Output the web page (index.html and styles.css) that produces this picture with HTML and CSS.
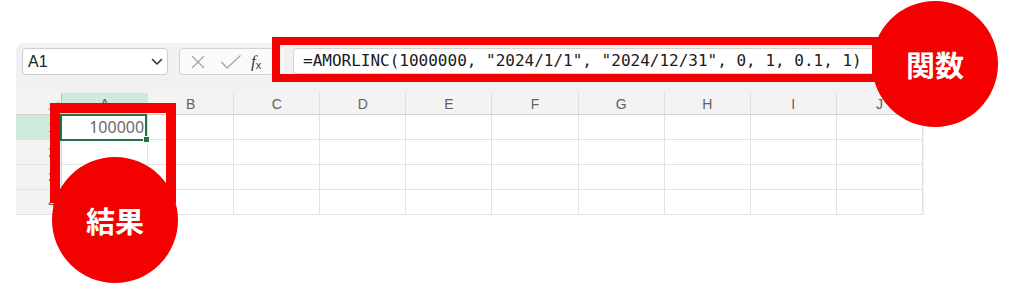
FILE: index.html
```html
<!DOCTYPE html>
<html lang="ja">
<head>
<meta charset="utf-8">
<title>AMORLINC</title>
<link rel="stylesheet" href="styles.css">
</head>
<body>
<div class="page">
  <div class="sheet">
    <div class="toolbar">
      <div class="namebox">
        <span class="ref">A1</span>
        <svg class="chev" width="12" height="8" viewBox="0 0 12 8"><path d="M1.5 1.5 L6 6 L10.5 1.5" fill="none" stroke="#333" stroke-width="1.6" stroke-linecap="round" stroke-linejoin="round"/></svg>
      </div>
      <div class="fnbtns">
        <svg class="ico" width="16" height="16" viewBox="0 0 16 16"><path d="M2 2 L14 14 M14 2 L2 14" fill="none" stroke="#a6a6a6" stroke-width="1.3"/></svg>
        <svg class="ico" width="22" height="16" viewBox="0 0 22 16"><path d="M1.5 8 L7 14 L20.5 1.5" fill="none" stroke="#a6a6a6" stroke-width="1.3"/></svg>
        <span class="fx">f<sub>x</sub></span>
      </div>
      <div class="sep"></div>
      <div class="formula">=AMORLINC(1000000, "2024/1/1", "2024/12/31", 0, 1, 0.1, 1)</div>
    </div>
    <div class="grid">
      <div class="hd corner"><svg class="tri" width="12" height="9" viewBox="0 0 12 9"><path d="M12 0 L12 9 L0 9 Z" fill="#b8b8b8"/></svg></div>
      <div class="hd col sel">A</div>
      <div class="hd col">B</div>
      <div class="hd col">C</div>
      <div class="hd col">D</div>
      <div class="hd col">E</div>
      <div class="hd col">F</div>
      <div class="hd col">G</div>
      <div class="hd col">H</div>
      <div class="hd col">I</div>
      <div class="hd col">J</div>

      <div class="rh sel">1</div>
      <div class="c active">100000<span class="handle"></span></div>
      <div class="c"></div><div class="c"></div><div class="c"></div><div class="c"></div><div class="c"></div><div class="c"></div><div class="c"></div><div class="c"></div><div class="c"></div>

      <div class="rh">2</div>
      <div class="c"></div><div class="c"></div><div class="c"></div><div class="c"></div><div class="c"></div><div class="c"></div><div class="c"></div><div class="c"></div><div class="c"></div><div class="c"></div>

      <div class="rh">3</div>
      <div class="c"></div><div class="c"></div><div class="c"></div><div class="c"></div><div class="c"></div><div class="c"></div><div class="c"></div><div class="c"></div><div class="c"></div><div class="c"></div>

      <div class="rh">4</div>
      <div class="c"></div><div class="c"></div><div class="c"></div><div class="c"></div><div class="c"></div><div class="c"></div><div class="c"></div><div class="c"></div><div class="c"></div><div class="c"></div>
    </div>
  </div>

  <div class="hl hl-formula"></div>
  <div class="hl hl-result"></div>
  <div class="badge badge-fn">関数</div>
  <div class="badge badge-res">結果</div>
</div>
</body>
</html>
```

FILE: styles.css
```css
html, body {
  margin: 0;
  padding: 0;
  background: #ffffff;
}

.page {
  position: relative;
  width: 1024px;
  height: 303px;
  overflow: hidden;
  box-sizing: border-box;
  padding: 43px 0 0 16px;
  font-family: "Liberation Sans", "Noto Sans", sans-serif;
}

.sheet {
  width: 908px;
  background: #f1f1f1;
  border-top-left-radius: 8px;
}

.toolbar {
  height: 50px;
  box-sizing: border-box;
  display: flex;
  align-items: flex-start;
  padding: 5px 6px 0 6px;
}

.namebox {
  width: 146px;
  height: 27px;
  box-sizing: border-box;
  background: #ffffff;
  border: 1px solid #cdcdcd;
  border-radius: 4px;
  display: flex;
  align-items: center;
  justify-content: space-between;
  padding: 0 4px 0 5px;
}

.ref {
  font-size: 16px;
  color: #222;
}

.chev {
  display: block;
  margin-top: 1px;
}

.fnbtns {
  width: 96px;
  height: 27px;
  box-sizing: border-box;
  margin-left: 11px;
  background: #fafafa;
  border: 1px solid #d3d3d3;
  border-radius: 4px;
  display: flex;
  align-items: center;
  padding-left: 10px;
}

.ico {
  display: block;
}

.fnbtns .ico + .ico {
  margin-left: 14px;
}

.fx {
  margin-left: 9px;
  font-family: "Liberation Serif", serif;
  font-style: italic;
  font-size: 17px;
  color: #3a3a3a;
  line-height: 1;
}

.fx sub {
  font-size: 11px;
  font-style: normal;
  font-family: "Liberation Sans", sans-serif;
  vertical-align: -2px;
}

.sep {
  width: 1px;
  height: 26px;
  margin-left: 7px;
  background: #fcfcfc;
}

.formula {
  flex: 1;
  height: 26px;
  box-sizing: border-box;
  margin-left: 10px;
  background: #ffffff;
  border: 1px solid #d3d3d3;
  border-radius: 4px;
  padding-left: 9px;
  font-family: "DejaVu Sans Mono", "Liberation Mono", monospace;
  font-size: 16px;
  line-height: 24px;
  color: #1a1a1a;
  white-space: nowrap;
  overflow: hidden;
}

.grid {
  display: grid;
  grid-template-columns: 46px repeat(10, 86.1px);
  grid-template-rows: 22px repeat(4, 25px);
}

.hd {
  box-sizing: border-box;
  background: #f3f3f3;
  border-bottom: 1px solid #d2d2d2;
  font-size: 14px;
  color: #626262;
  display: flex;
  align-items: center;
  justify-content: center;
}

.col {
  border-right: 1px solid #dedede;
}

.corner {
  position: relative;
  border-right: 1px solid #bdbdbd;
  justify-content: flex-end;
  align-items: flex-end;
  padding: 0 2px 4px 0;
}

.tri {
  display: block;
}

.hd.sel {
  background: #cdeada;
}

.rh {
  box-sizing: border-box;
  background: #f3f3f3;
  border-right: 1px solid #d2d2d2;
  border-bottom: 1px solid #e2e2e2;
  font-size: 14px;
  color: #626262;
  display: flex;
  align-items: center;
  justify-content: flex-end;
  padding-right: 5px;
}

.rh.sel {
  background: #cdeada;
}

.c {
  box-sizing: border-box;
  background: #ffffff;
  border-right: 1px solid #e2e2e2;
  border-bottom: 1px solid #e2e2e2;
}

.active {
  position: relative;
  display: flex;
  align-items: center;
  justify-content: flex-end;
  padding-right: 3px;
  font-family: "Noto Sans", "Liberation Sans", sans-serif;
  font-size: 16px;
  color: #6a6a6a;
}

.active::after {
  content: "";
  position: absolute;
  left: -2px;
  top: -1px;
  right: 0;
  bottom: -2px;
  border: 2px solid #1f7346;
}

.handle {
  position: absolute;
  right: -3px;
  bottom: -4px;
  width: 5px;
  height: 5px;
  background: #1f7346;
  border: 1px solid #ffffff;
  z-index: 1;
}

.hl {
  position: absolute;
  box-sizing: border-box;
  border-style: solid;
  border-color: #f40000;
}

.hl-formula {
  left: 272px;
  top: 37px;
  width: 608px;
  height: 45px;
  border-width: 8px;
}

.hl-result {
  left: 50px;
  top: 103px;
  width: 126px;
  height: 100px;
  border-width: 10px;
}

.badge {
  position: absolute;
  width: 126px;
  height: 126px;
  border-radius: 50%;
  background: #f40000;
  color: #ffffff;
  font-family: "Noto Sans CJK JP", "Noto Sans", sans-serif;
  font-weight: 700;
  font-size: 29px;
  display: flex;
  align-items: center;
  justify-content: center;
}

.badge-fn {
  left: 872px;
  top: 1px;
}

.badge-res {
  left: 52px;
  top: 157px;
}
```
